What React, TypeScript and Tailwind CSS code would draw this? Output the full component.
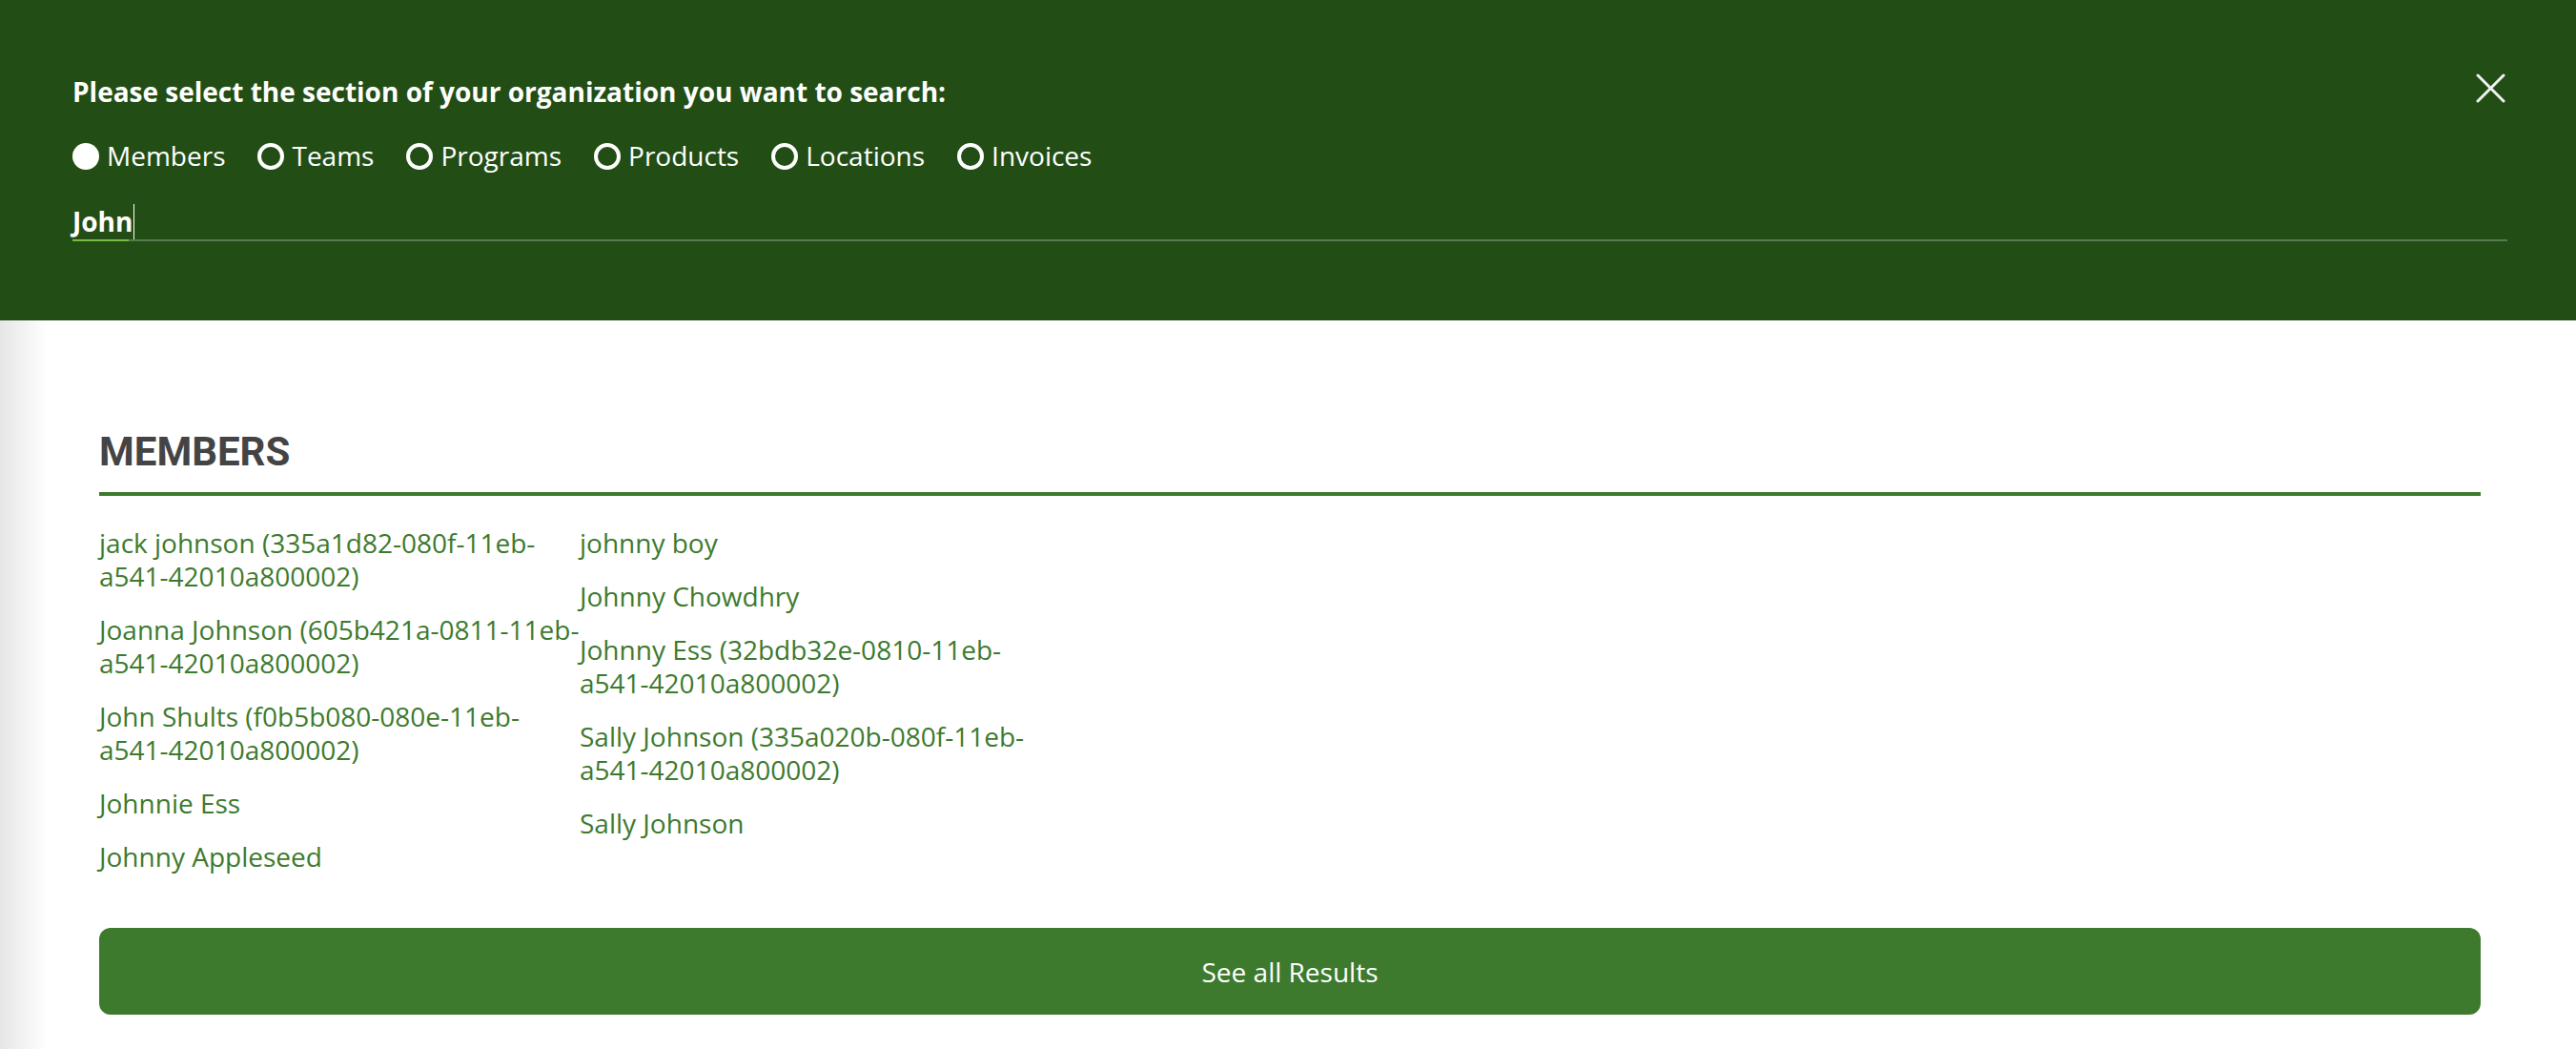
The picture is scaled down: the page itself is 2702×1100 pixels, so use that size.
const sections = ["Members", "Teams", "Programs", "Products", "Locations", "Invoices"];

const columns = [
  [
    "jack johnson (335a1d82-080f-11eb-a541-42010a800002)",
    "Joanna Johnson (605b421a-0811-11eb-a541-42010a800002)",
    "John Shults (f0b5b080-080e-11eb-a541-42010a800002)",
    "Johnnie Ess",
    "Johnny Appleseed",
  ],
  [
    "johnny boy",
    "Johnny Chowdhry",
    "Johnny Ess (32bdb32e-0810-11eb-a541-42010a800002)",
    "Sally Johnson (335a020b-080f-11eb-a541-42010a800002)",
    "Sally Johnson",
  ],
];

function Radio({ label, checked }: { label: string; checked?: boolean }) {
  return (
    <label className="flex items-center gap-[8px]">
      <span
        className={
          checked
            ? "h-[28px] w-[28px] rounded-full bg-white"
            : "h-[28px] w-[28px] rounded-full border-[4px] border-white"
        }
      />
      <span className="text-[28px] leading-[35px] text-white">{label}</span>
    </label>
  );
}

export default function App() {
  return (
    <div className="flex h-[1100px] flex-col font-['Open_Sans',sans-serif]">
      <header className="h-[336px] bg-[#224e15] pl-[76px] pr-[72px] pt-[78px]">
        <div className="flex items-center justify-between">
          <h2 className="text-[28px] font-bold leading-[36px] text-white">
            Please select the section of your organization you want to search:
          </h2>
          <button type="button" className="-mt-2 mr-[2px] text-[#f2f2f2]" aria-label="Close">
            <svg width="31" height="31" viewBox="0 0 31 31" fill="none">
              <path d="M2 2L29 29M29 2L2 29" stroke="currentColor" strokeWidth="3" strokeLinecap="round" />
            </svg>
          </button>
        </div>

        <div className="mt-[32px] flex items-center gap-[34px]">
          {sections.map((s, i) => (
            <Radio key={s} label={s} checked={i === 0} />
          ))}
        </div>

        <div className="mt-[34px]">
          <div className="flex h-[35px] items-center text-[28px] font-bold leading-[35px] text-white">
            John
            <span className="ml-[1px] h-[38px] w-px bg-white" />
          </div>
          <div className="mt-px flex h-[2px]">
            <div className="w-[59px] bg-[#76bc43]" />
            <div className="flex-1 bg-[#597a50]" />
          </div>
        </div>
      </header>

      <main className="flex-1 bg-[linear-gradient(to_right,#e6e6e6,#ffffff_50px)] pl-[104px] pr-[100px] pt-[117px]">
        <h3 className="font-['Roboto',sans-serif] text-[42px] font-bold leading-[42px] text-[#444444]">
          MEMBERS
        </h3>
        <div className="mt-[21px] h-[4px] bg-[#3d7a2e]" />

        <div className="mt-[32px] flex">
          {columns.map((col, ci) => (
            <div key={ci} className="flex w-[504px] flex-col gap-[21px]">
              {col.map((name) => (
                <a key={name} href="#" className="text-[28px] leading-[35px] text-[#3d7a2e]">
                  {name}
                </a>
              ))}
            </div>
          ))}
        </div>

        <button
          type="button"
          className="mt-[57px] h-[91px] w-full rounded-[12px] bg-[#3d7a2e] text-[28px] text-white"
        >
          See all Results
        </button>
      </main>
    </div>
  );
}
